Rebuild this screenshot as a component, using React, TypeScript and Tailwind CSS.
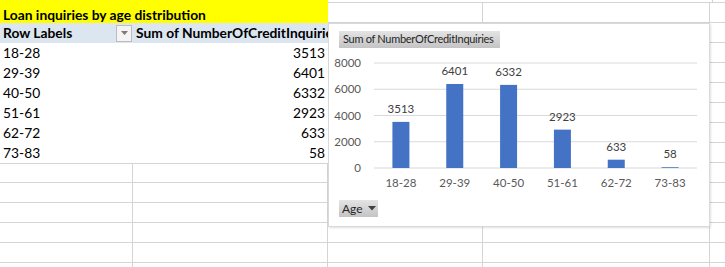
import React from 'react';

const data = [
  { label: '18-28', value: 3513 },
  { label: '29-39', value: 6401 },
  { label: '40-50', value: 6332 },
  { label: '51-61', value: 2923 },
  { label: '62-72', value: 633 },
  { label: '73-83', value: 58 },
];

const ticks = [0, 2000, 4000, 6000, 8000];

// right-hand sheet cells behind the chart
const RightCells = () => (
  <div className="flex flex-1">
    <div className="w-[155px] border-r border-b border-[#d4d4d4]" />
    <div className="w-[227px] border-r border-b border-[#d4d4d4]" />
    <div className="flex-1 border-b border-[#d4d4d4]" />
  </div>
);

const Chart = () => {
  const plotLeft = 45;
  const plotRight = 368;
  const step = (plotRight - plotLeft) / data.length;
  const y = (v: number) => 120 - (v / 8000) * 105;

  return (
    <div className="absolute left-[328px] top-[23px] w-[382px] h-[204px] bg-white border border-[#d9d9d9] shadow-[1px_1px_2px_rgba(0,0,0,0.12)]">
      <div className="ml-[10px] mt-[7px] h-[17px] w-[161px] pl-[4px] flex items-center whitespace-nowrap bg-gradient-to-b from-[#e4e4e4] to-[#c4c4c4] text-[11px] text-[#262626] tracking-[-0.3px]">
        Sum of NumberOfCreditInquiries
      </div>

      <svg width={380} height={150} className="block">
        {ticks.map((t) => (
          <g key={t}>
            <line x1={plotLeft} x2={plotRight} y1={y(t)} y2={y(t)} stroke="#d9d9d9" strokeWidth={1} />
            <text x={32} y={y(t) + 4} textAnchor="end" fontSize={11.5} fill="#595959" fontFamily="Lato, 'Liberation Sans', sans-serif">
              {t}
            </text>
          </g>
        ))}
        {data.map((d, i) => {
          const cx = plotLeft + step * i + step / 2;
          const top = y(d.value);
          return (
            <g key={d.label}>
              <rect x={cx - 8.5} y={top} width={17} height={120 - top} fill="#4472c4" />
              <text x={cx} y={top - 9} textAnchor="middle" fontSize={11.5} fill="#404040" fontFamily="Lato, 'Liberation Sans', sans-serif">
                {d.value}
              </text>
              <text x={cx} y={139} textAnchor="middle" fontSize={11.5} fill="#595959" fontFamily="Lato, 'Liberation Sans', sans-serif">
                {d.label}
              </text>
            </g>
          );
        })}
      </svg>

      <div className="ml-[10px] mt-[2px] h-[17px] w-[39px] pl-[3px] flex items-center gap-[5px] bg-gradient-to-b from-[#e4e4e4] to-[#c4c4c4] text-[12px] text-[#262626]">
        Age
        <svg width="8" height="5" viewBox="0 0 8 5">
          <path d="M0 0h8L4 4.5z" fill="#404040" />
        </svg>
      </div>
    </div>
  );
};

export default function App() {
  return (
    <div className="relative w-[725px] h-[267px] bg-white overflow-hidden font-['Lato','Liberation_Sans',sans-serif] text-[13.8px] text-black">
      {/* title row */}
      <div className="flex h-[23px]">
        <div className="w-[328px] bg-[#ffff00] font-bold pl-[3px] flex items-end pb-[1px] leading-none">
          Loan inquiries by age distribution
        </div>
        <div className="flex-1 flex flex-col">
          <div className="h-[3px] flex border-b border-[#d4d4d4]">
            <div className="w-[385px] border-r border-[#d4d4d4]" />
          </div>
          <RightCells />
        </div>
      </div>

      {/* pivot header */}
      <div className="flex h-[20px]">
        <div className="w-[328px] bg-[#dce6f1] flex items-center font-bold">
          <div className="w-[133px] flex items-center justify-between pl-[3px] pr-[1px]">
            <span>Row Labels</span>
            <span className="w-[16px] h-[17px] bg-[#f4f4f4] border border-[#bdbdbd] flex items-center justify-center">
              <svg width="7" height="4" viewBox="0 0 7 4">
                <path d="M0 0h7L3.5 4z" fill="#7a7a7a" />
              </svg>
            </span>
          </div>
          <div className="w-[195px] pl-[3px] whitespace-nowrap overflow-hidden">Sum of NumberOfCreditInquiries</div>
        </div>
        <RightCells />
      </div>

      {/* pivot rows */}
      {data.map((d) => (
        <div key={d.label} className="flex h-[20px]">
          <div className="w-[328px] flex items-center justify-between pl-[3px] pr-[3px]">
            <span>{d.label}</span>
            <span>{d.value}</span>
          </div>
          <RightCells />
        </div>
      ))}

      {/* empty sheet rows */}
      {[0, 1, 2, 3, 4, 5].map((r) => (
        <div key={r} className="flex h-[20px]">
          <div className={`w-[133px] border-r border-[#d4d4d4] ${r === 0 ? 'border-t' : ''} border-b`} />
          <div className={`w-[195px] border-r border-[#d4d4d4] ${r === 0 ? 'border-t' : ''} border-b`} />
          <RightCells />
        </div>
      ))}

      <Chart />
    </div>
  );
}
